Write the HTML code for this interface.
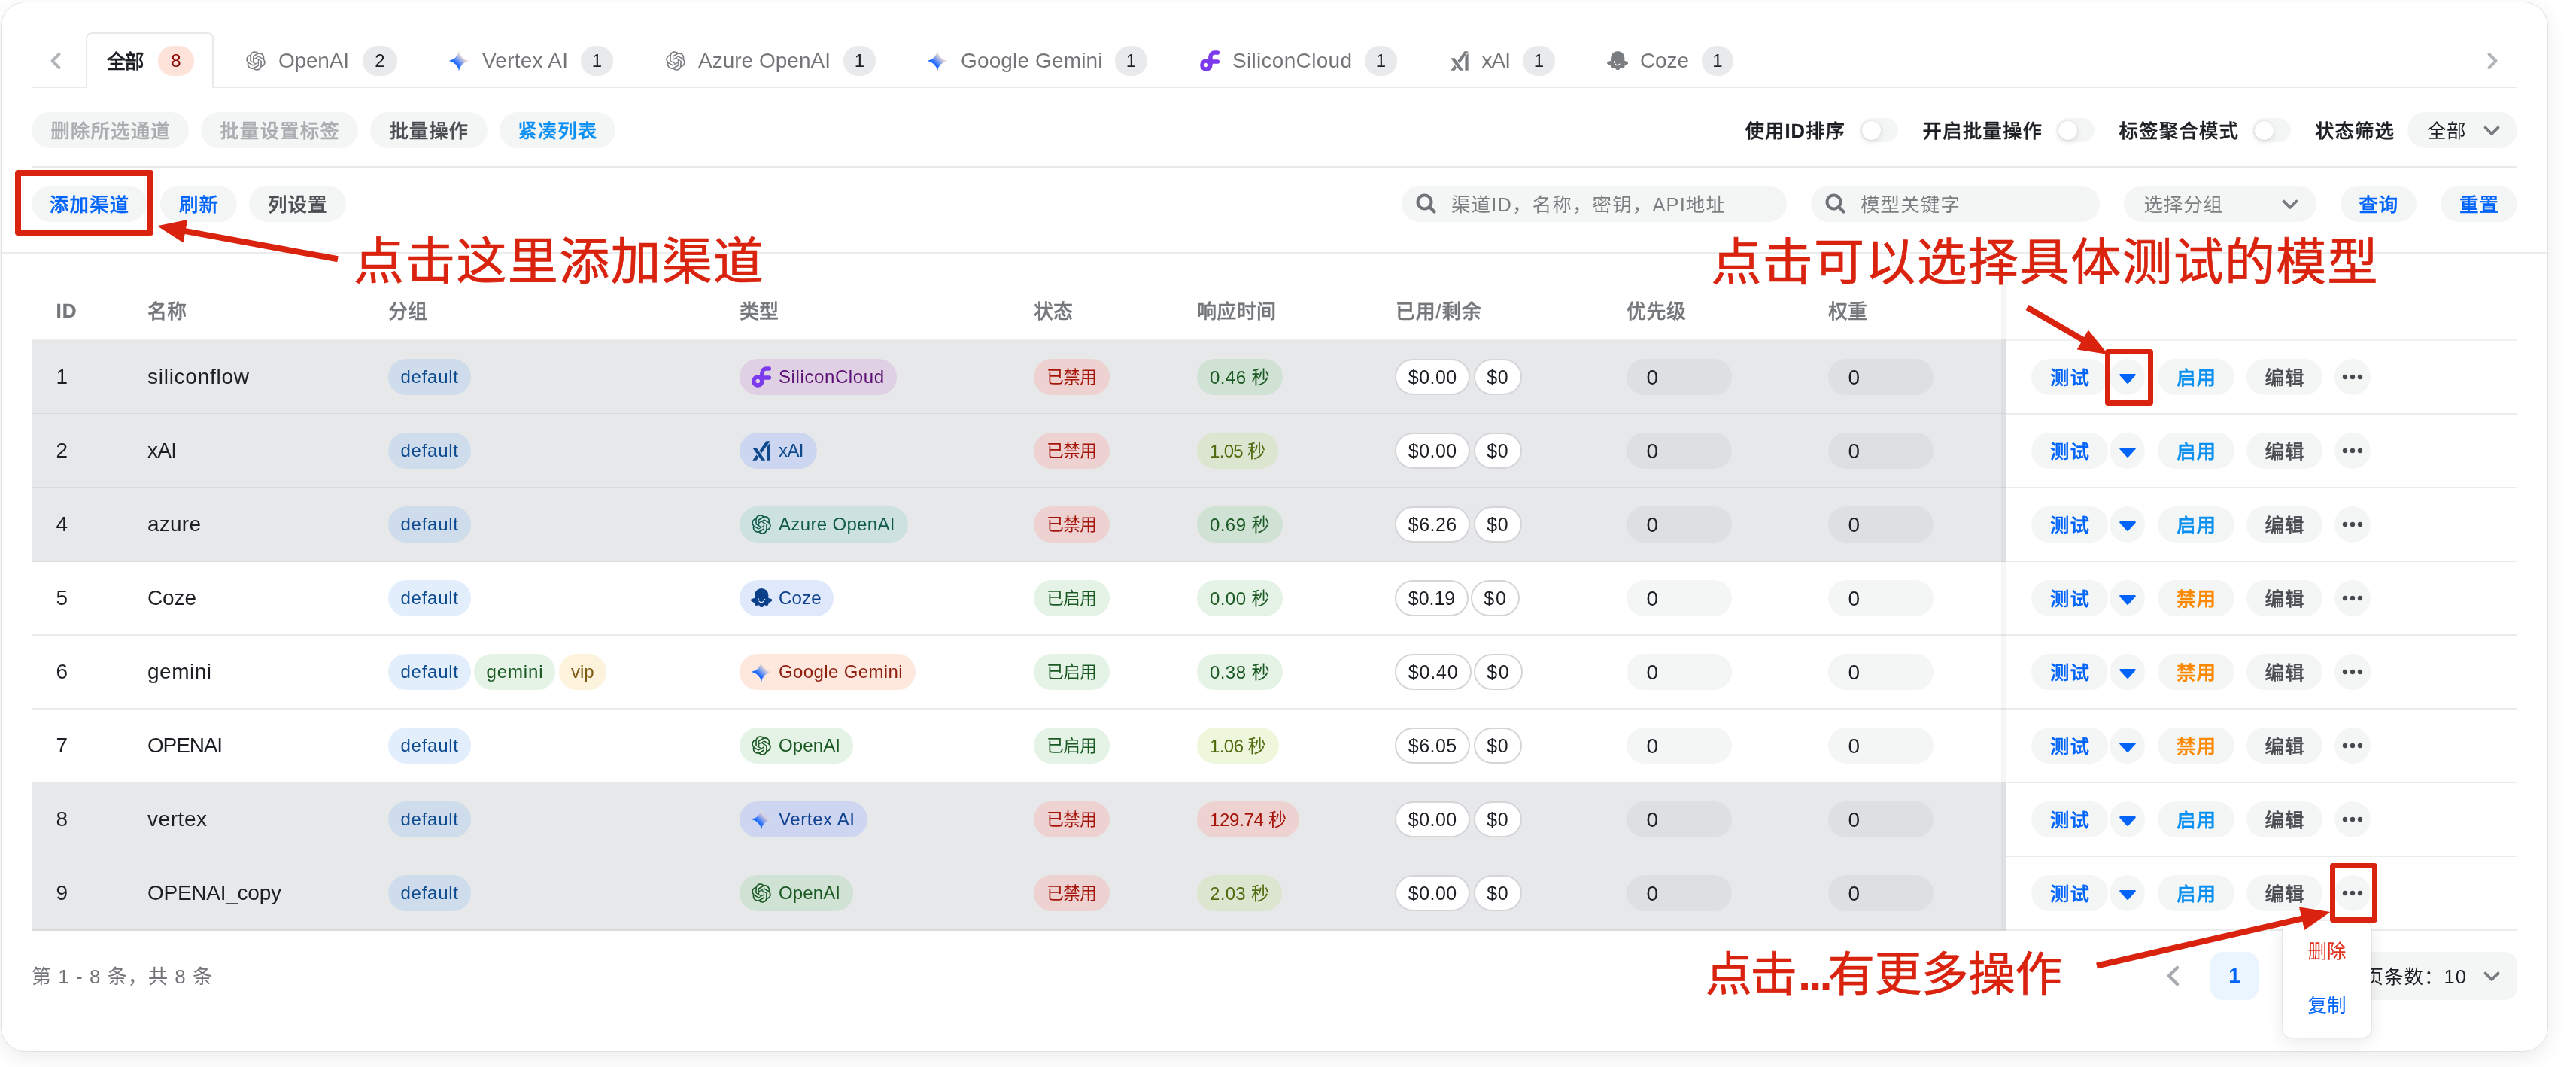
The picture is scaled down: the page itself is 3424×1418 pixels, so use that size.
<!DOCTYPE html>
<html lang="zh-CN"><head><meta charset="utf-8"><title>渠道管理</title><style>
html,body{margin:0;padding:0;}
body{width:3424px;height:1418px;overflow:hidden;background:#fff;font-family:"Liberation Sans","Noto Sans CJK SC",sans-serif;position:relative;}
#root{position:absolute;left:0;top:0;width:3424px;height:1418px;will-change:transform;}
.a{position:absolute;box-sizing:border-box;}
.t{white-space:nowrap;}
b{font-weight:700;}
</style></head><body>
<svg width="0" height="0" style="position:absolute"><defs><linearGradient id="gg" x1="0%" x2="68.73%" y1="100%" y2="30.395%"><stop offset="0%" stop-color="#1C7DFF"/><stop offset="52.021%" stop-color="#1C69FF"/><stop offset="100%" stop-color="#F0DCD6"/></linearGradient></defs></svg>
<div id="root">
<div class="a" style="left:0.5px;top:1.5px;width:3386.5px;height:1396.5px;background:#fff;border-radius:33px;border:1.5px solid #DFE1E4;box-shadow:0 8px 28px rgba(0,0,0,.08);"></div>
<div class="a" style="left:42px;top:115px;width:3304px;height:2px;background:#E9EAEC;border-radius:0px;"></div>
<div class="a" style="left:114px;top:43px;width:169.5px;height:74px;background:#fff;border-radius:8px 8px 0 0;border:2px solid #E9EAEC;border-bottom:none;"></div>
<svg class="a" style="left:63px;top:65px" width="24" height="32" viewBox="0 0 24 32"><path d="M15.5 7L6.5 16l9 9" fill="none" stroke="#B2B6B8" stroke-width="4" stroke-linecap="round" stroke-linejoin="round"/></svg>
<svg class="a" style="left:3301px;top:65px" width="24" height="32" viewBox="0 0 24 32"><path d="M7.5 7l9 9-9 9" fill="none" stroke="#B2B6B8" stroke-width="4" stroke-linecap="round" stroke-linejoin="round"/></svg>
<span class="a t" style="left:141.50px;top:62.80px;height:39px;line-height:39px;font-size:26px;color:#1C1F23;font-weight:500;letter-spacing:-2.016px;-webkit-text-stroke:.4px;">全部</span>
<div class="a" style="left:210px;top:61px;width:48px;height:40px;background:#FDE3DA;border-radius:20px;"></div>
<span class="a t" style="left:227.32px;top:63.00px;height:36px;line-height:36px;font-size:24px;color:#8E0805;font-weight:500;">8</span>
<svg class="a" style="left:326px;top:67px;color:#7A7D80;" width="28" height="28" viewBox="0 0 24 24"><path fill="currentColor" transform="translate(1 1) scale(.9167)" d="M22.2819 9.8211a5.9847 5.9847 0 0 0-.5157-4.9108 6.0462 6.0462 0 0 0-6.5098-2.9A6.0651 6.0651 0 0 0 4.9807 4.1818a5.9847 5.9847 0 0 0-3.9977 2.9 6.0462 6.0462 0 0 0 .7427 7.0966 5.98 5.98 0 0 0 .511 4.9107 6.051 6.051 0 0 0 6.5146 2.9001A5.9847 5.9847 0 0 0 13.2599 24a6.0557 6.0557 0 0 0 5.7718-4.2058 5.9894 5.9894 0 0 0 3.9977-2.9001 6.0557 6.0557 0 0 0-.7475-7.0729zm-9.022 12.6081a4.4755 4.4755 0 0 1-2.8764-1.0408l.1419-.0804 4.7783-2.7582a.7948.7948 0 0 0 .3927-.6813v-6.7369l2.02 1.1686a.071.071 0 0 1 .038.052v5.5826a4.504 4.504 0 0 1-4.4945 4.4944zm-9.6607-4.1254a4.4708 4.4708 0 0 1-.5346-3.0137l.142.0852 4.783 2.7582a.7712.7712 0 0 0 .7806 0l5.8428-3.3685v2.3324a.0804.0804 0 0 1-.0332.0615L9.74 19.9502a4.4992 4.4992 0 0 1-6.1408-1.6464zM2.3408 7.8956a4.485 4.485 0 0 1 2.3655-1.9728V11.6a.7664.7664 0 0 0 .3879.6765l5.8144 3.3543-2.0201 1.1685a.0757.0757 0 0 1-.071 0l-4.8303-2.7865A4.504 4.504 0 0 1 2.3408 7.872zm16.5963 3.8558L13.1038 8.364 15.1192 7.2a.0757.0757 0 0 1 .071 0l4.8303 2.7913a4.4944 4.4944 0 0 1-.6765 8.1042v-5.6772a.79.79 0 0 0-.407-.667zm2.0107-3.0231l-.142-.0852-4.7735-2.7818a.7759.7759 0 0 0-.7854 0L9.409 9.2297V6.8974a.0662.0662 0 0 1 .0284-.0615l4.8303-2.7866a4.4992 4.4992 0 0 1 6.6802 4.66zM8.3065 12.863l-2.02-1.1638a.0804.0804 0 0 1-.038-.0567V6.0742a4.4992 4.4992 0 0 1 7.3757-3.4537l-.142.0805L8.704 5.459a.7948.7948 0 0 0-.3927.6813zm1.0976-2.3654l2.602-1.4998 2.6069 1.4998v2.9994l-2.5974 1.4997-2.6067-1.4997Z"/></svg>
<span class="a t" style="left:370.00px;top:60.00px;height:42px;line-height:42px;font-size:28px;color:rgba(28,31,35,.62);font-weight:400;letter-spacing:-0.191px;">OpenAI</span>
<div class="a" style="left:482px;top:61px;width:46px;height:40px;background:#E9EAEB;border-radius:20px;"></div>
<span class="a t" style="left:498.32px;top:63.00px;height:36px;line-height:36px;font-size:24px;color:#1C1F23;font-weight:400;">2</span>
<svg class="a" style="left:595.5px;top:67px;color:#7A7D80;" width="28" height="28" viewBox="0 0 24 24"><path fill="url(#gg)" transform="translate(.5 .5) scale(0.9583)" d="M12 24A14.304 14.304 0 0 0 0 12 14.304 14.304 0 0 0 12 0a14.305 14.305 0 0 0 12 12 14.305 14.305 0 0 0-12 12"/></svg>
<span class="a t" style="left:641.00px;top:60.00px;height:42px;line-height:42px;font-size:28px;color:rgba(28,31,35,.62);font-weight:400;letter-spacing:0.240px;">Vertex AI</span>
<div class="a" style="left:772px;top:61px;width:43px;height:40px;background:#E9EAEB;border-radius:20px;"></div>
<span class="a t" style="left:786.82px;top:63.00px;height:36px;line-height:36px;font-size:24px;color:#1C1F23;font-weight:400;">1</span>
<svg class="a" style="left:884px;top:67px;color:#7A7D80;" width="28" height="28" viewBox="0 0 24 24"><path fill="currentColor" transform="translate(1 1) scale(.9167)" d="M22.2819 9.8211a5.9847 5.9847 0 0 0-.5157-4.9108 6.0462 6.0462 0 0 0-6.5098-2.9A6.0651 6.0651 0 0 0 4.9807 4.1818a5.9847 5.9847 0 0 0-3.9977 2.9 6.0462 6.0462 0 0 0 .7427 7.0966 5.98 5.98 0 0 0 .511 4.9107 6.051 6.051 0 0 0 6.5146 2.9001A5.9847 5.9847 0 0 0 13.2599 24a6.0557 6.0557 0 0 0 5.7718-4.2058 5.9894 5.9894 0 0 0 3.9977-2.9001 6.0557 6.0557 0 0 0-.7475-7.0729zm-9.022 12.6081a4.4755 4.4755 0 0 1-2.8764-1.0408l.1419-.0804 4.7783-2.7582a.7948.7948 0 0 0 .3927-.6813v-6.7369l2.02 1.1686a.071.071 0 0 1 .038.052v5.5826a4.504 4.504 0 0 1-4.4945 4.4944zm-9.6607-4.1254a4.4708 4.4708 0 0 1-.5346-3.0137l.142.0852 4.783 2.7582a.7712.7712 0 0 0 .7806 0l5.8428-3.3685v2.3324a.0804.0804 0 0 1-.0332.0615L9.74 19.9502a4.4992 4.4992 0 0 1-6.1408-1.6464zM2.3408 7.8956a4.485 4.485 0 0 1 2.3655-1.9728V11.6a.7664.7664 0 0 0 .3879.6765l5.8144 3.3543-2.0201 1.1685a.0757.0757 0 0 1-.071 0l-4.8303-2.7865A4.504 4.504 0 0 1 2.3408 7.872zm16.5963 3.8558L13.1038 8.364 15.1192 7.2a.0757.0757 0 0 1 .071 0l4.8303 2.7913a4.4944 4.4944 0 0 1-.6765 8.1042v-5.6772a.79.79 0 0 0-.407-.667zm2.0107-3.0231l-.142-.0852-4.7735-2.7818a.7759.7759 0 0 0-.7854 0L9.409 9.2297V6.8974a.0662.0662 0 0 1 .0284-.0615l4.8303-2.7866a4.4992 4.4992 0 0 1 6.6802 4.66zM8.3065 12.863l-2.02-1.1638a.0804.0804 0 0 1-.038-.0567V6.0742a4.4992 4.4992 0 0 1 7.3757-3.4537l-.142.0805L8.704 5.459a.7948.7948 0 0 0-.3927.6813zm1.0976-2.3654l2.602-1.4998 2.6069 1.4998v2.9994l-2.5974 1.4997-2.6067-1.4997Z"/></svg>
<span class="a t" style="left:928.00px;top:60.00px;height:42px;line-height:42px;font-size:28px;color:rgba(28,31,35,.62);font-weight:400;letter-spacing:0.011px;">Azure OpenAI</span>
<div class="a" style="left:1121px;top:61px;width:43px;height:40px;background:#E9EAEB;border-radius:20px;"></div>
<span class="a t" style="left:1135.82px;top:63.00px;height:36px;line-height:36px;font-size:24px;color:#1C1F23;font-weight:400;">1</span>
<svg class="a" style="left:1232px;top:67px;color:#7A7D80;" width="28" height="28" viewBox="0 0 24 24"><path fill="url(#gg)" transform="translate(.5 .5) scale(0.9583)" d="M12 24A14.304 14.304 0 0 0 0 12 14.304 14.304 0 0 0 12 0a14.305 14.305 0 0 0 12 12 14.305 14.305 0 0 0-12 12"/></svg>
<span class="a t" style="left:1277.00px;top:60.00px;height:42px;line-height:42px;font-size:28px;color:rgba(28,31,35,.62);font-weight:400;letter-spacing:0.145px;">Google Gemini</span>
<div class="a" style="left:1482px;top:61px;width:43px;height:40px;background:#E9EAEB;border-radius:20px;"></div>
<span class="a t" style="left:1496.82px;top:63.00px;height:36px;line-height:36px;font-size:24px;color:#1C1F23;font-weight:400;">1</span>
<svg class="a" style="left:1594px;top:67px;color:#7C3AED;" width="28" height="28" viewBox="0 0 24 24"><g fill="none" stroke="currentColor" stroke-width="4.8" stroke-linecap="round"><circle cx="8" cy="16.75" r="4.7"/><path d="M12.8 15.5V7.4a4.8 4.8 0 0 1 4.8-4.8h3.2M12.8 12.8h8"/></g></svg>
<span class="a t" style="left:1638.00px;top:60.00px;height:42px;line-height:42px;font-size:28px;color:rgba(28,31,35,.62);font-weight:400;letter-spacing:0.305px;">SiliconCloud</span>
<div class="a" style="left:1814px;top:61px;width:43px;height:40px;background:#E9EAEB;border-radius:20px;"></div>
<span class="a t" style="left:1828.82px;top:63.00px;height:36px;line-height:36px;font-size:24px;color:#1C1F23;font-weight:400;">1</span>
<svg class="a" style="left:1926px;top:67px;color:#7A7D80;" width="28" height="28" viewBox="0 0 24 24"><path fill="currentColor" d="M6.469 8.776L16.512 23h-4.464L2.005 8.776H6.47zm-.004 7.9l2.233 3.164L6.467 23H2l4.465-6.324zM22 2.582V23h-3.659V7.764L22 2.582zM22 1l-9.952 14.095-2.233-3.163L17.533 1H22z"/></svg>
<span class="a t" style="left:1969.50px;top:60.00px;height:42px;line-height:42px;font-size:28px;color:rgba(28,31,35,.62);font-weight:400;letter-spacing:-0.984px;">xAI</span>
<div class="a" style="left:2024px;top:61px;width:43px;height:40px;background:#E9EAEB;border-radius:20px;"></div>
<span class="a t" style="left:2038.82px;top:63.00px;height:36px;line-height:36px;font-size:24px;color:#1C1F23;font-weight:400;">1</span>
<svg class="a" style="left:2136px;top:67px;color:#7A7D80;" width="28" height="28" viewBox="0 0 24 24"><g fill="currentColor"><path d="M4.4 8.3A7.8 7.45 0 0 1 20 8.3V18.7H4.4z"/><rect x="6.3" y="17.5" width="11.8" height="2.5"/><path d="M4.6 11.7L1.2 12.9A1.4 1.4 0 0 0 1 15.6L4.6 17.7zM19.8 11.7l3.4 1.2a1.4 1.4 0 0 1 .2 2.7L19.8 17.7z"/><circle cx="6.3" cy="18.7" r="1.95"/><circle cx="12.2" cy="19.7" r="2.65"/><circle cx="18.1" cy="18.7" r="1.95"/></g><g fill="var(--e,#fff)" stroke="none"><rect x="7.75" y="11.9" width="1.45" height="2.7" rx=".72"/><rect x="14.7" y="12.75" width="1.75" height=".9" rx=".45"/></g><path d="M9.4 15.5Q11.95 18.4 14.5 15.5" fill="none" stroke="var(--e,#fff)" stroke-width="1.05" stroke-linecap="round"/></svg>
<span class="a t" style="left:2180.00px;top:60.00px;height:42px;line-height:42px;font-size:28px;color:rgba(28,31,35,.62);font-weight:400;letter-spacing:-0.125px;">Coze</span>
<div class="a" style="left:2262px;top:61px;width:42px;height:40px;background:#E9EAEB;border-radius:20px;"></div>
<span class="a t" style="left:2276.32px;top:63.00px;height:36px;line-height:36px;font-size:24px;color:#1C1F23;font-weight:400;">1</span>
<div class="a" style="left:42px;top:149px;width:209px;height:48px;background:rgba(46,50,56,.05);border-radius:24.0px;"></div>
<span class="a t" style="left:67.25px;top:155.28px;height:38px;line-height:38px;font-size:25.5px;color:#AAADB0;font-weight:500;letter-spacing:1.097px;-webkit-text-stroke:.4px;">删除所选通道</span>
<div class="a" style="left:267px;top:149px;width:209px;height:48px;background:rgba(46,50,56,.05);border-radius:24.0px;"></div>
<span class="a t" style="left:292.25px;top:155.28px;height:38px;line-height:38px;font-size:25.5px;color:#AAADB0;font-weight:500;letter-spacing:1.097px;-webkit-text-stroke:.4px;">批量设置标签</span>
<div class="a" style="left:492px;top:149px;width:155.5px;height:48px;background:rgba(46,50,56,.05);border-radius:24.0px;"></div>
<span class="a t" style="left:517.50px;top:155.28px;height:38px;line-height:38px;font-size:25.5px;color:#4B4E52;font-weight:500;letter-spacing:0.828px;-webkit-text-stroke:.4px;">批量操作</span>
<div class="a" style="left:663.5px;top:149px;width:154.5px;height:48px;background:rgba(46,50,56,.05);border-radius:24.0px;"></div>
<span class="a t" style="left:688.25px;top:155.28px;height:38px;line-height:38px;font-size:25.5px;color:#0A90F5;font-weight:500;letter-spacing:0.995px;-webkit-text-stroke:.4px;">紧凑列表</span>
<span class="a t" style="left:2319.50px;top:155.28px;height:38px;line-height:38px;font-size:25.5px;color:#1C1F23;font-weight:500;letter-spacing:0.994px;-webkit-text-stroke:.4px;">使用<b>ID</b>排序</span>
<div class="a" style="left:2471.5px;top:157px;width:51px;height:32px;background:rgba(46,50,56,.05);border-radius:16px;"></div>
<div class="a" style="left:2474.5px;top:160.5px;width:25px;height:25px;background:#fff;border-radius:13px;box-shadow:0 3px 8px rgba(0,0,0,.10),0 0 2px rgba(0,0,0,.12);"></div>
<span class="a t" style="left:2555.50px;top:155.28px;height:38px;line-height:38px;font-size:25.5px;color:#1C1F23;font-weight:500;letter-spacing:1.097px;-webkit-text-stroke:.4px;">开启批量操作</span>
<div class="a" style="left:2732.5px;top:157px;width:51px;height:32px;background:rgba(46,50,56,.05);border-radius:16px;"></div>
<div class="a" style="left:2735.5px;top:160.5px;width:25px;height:25px;background:#fff;border-radius:13px;box-shadow:0 3px 8px rgba(0,0,0,.10),0 0 2px rgba(0,0,0,.12);"></div>
<span class="a t" style="left:2816.50px;top:155.28px;height:38px;line-height:38px;font-size:25.5px;color:#1C1F23;font-weight:500;letter-spacing:1.097px;-webkit-text-stroke:.4px;">标签聚合模式</span>
<div class="a" style="left:2993.5px;top:157px;width:51px;height:32px;background:rgba(46,50,56,.05);border-radius:16px;"></div>
<div class="a" style="left:2996.5px;top:160.5px;width:25px;height:25px;background:#fff;border-radius:13px;box-shadow:0 3px 8px rgba(0,0,0,.10),0 0 2px rgba(0,0,0,.12);"></div>
<span class="a t" style="left:3077.00px;top:155.28px;height:38px;line-height:38px;font-size:25.5px;color:#1C1F23;font-weight:500;letter-spacing:0.995px;-webkit-text-stroke:.4px;">状态筛选</span>
<div class="a" style="left:3200px;top:149px;width:146px;height:48px;background:rgba(46,50,56,.05);border-radius:24px;"></div>
<span class="a t" style="left:3226.00px;top:155.28px;height:38px;line-height:38px;font-size:25.5px;color:#1C1F23;font-weight:400;letter-spacing:0.484px;">全部</span>
<svg class="a" style="left:3300px;top:165px" width="24" height="18" viewBox="0 0 24 18"><path d="M3.5 4.5L12 13l8.5-8.5" fill="none" stroke="#777A7F" stroke-width="3.8" stroke-linecap="round" stroke-linejoin="round"/></svg>
<div class="a" style="left:42px;top:221px;width:3304px;height:2px;background:#E9EAEC;border-radius:0px;"></div>
<div class="a" style="left:42px;top:247px;width:153px;height:48px;background:rgba(46,50,56,.05);border-radius:24.0px;"></div>
<span class="a t" style="left:65.75px;top:253.28px;height:38px;line-height:38px;font-size:25.5px;color:#0064FA;font-weight:500;letter-spacing:1.161px;-webkit-text-stroke:.4px;">添加渠道</span>
<div class="a" style="left:213px;top:247px;width:102px;height:48px;background:rgba(46,50,56,.05);border-radius:24.0px;"></div>
<span class="a t" style="left:238.00px;top:253.28px;height:38px;line-height:38px;font-size:25.5px;color:#0064FA;font-weight:500;letter-spacing:0.984px;-webkit-text-stroke:.4px;">刷新</span>
<div class="a" style="left:330.5px;top:247px;width:129.5px;height:48px;background:rgba(46,50,56,.05);border-radius:24.0px;"></div>
<span class="a t" style="left:356.00px;top:253.28px;height:38px;line-height:38px;font-size:25.5px;color:#4B4E52;font-weight:500;letter-spacing:0.992px;-webkit-text-stroke:.4px;">列设置</span>
<div class="a" style="left:1863px;top:247px;width:512px;height:48px;background:rgba(46,50,56,.05);border-radius:24px;"></div>
<svg class="a" style="left:1881px;top:256px" width="30" height="30" viewBox="0 0 30 30"><circle cx="12.5" cy="12.5" r="9" fill="none" stroke="#6F7276" stroke-width="4"/><path d="M19.5 19.5L25.5 25.5" stroke="#6F7276" stroke-width="4.2" stroke-linecap="round"/></svg>
<span class="a t" style="left:1929.00px;top:253.28px;height:38px;line-height:38px;font-size:25.5px;color:rgba(28,31,35,.56);font-weight:400;letter-spacing:1.126px;">渠道ID，名称，密钥，API地址</span>
<div class="a" style="left:2407px;top:247px;width:384px;height:48px;background:rgba(46,50,56,.05);border-radius:24px;"></div>
<svg class="a" style="left:2425px;top:256px" width="30" height="30" viewBox="0 0 30 30"><circle cx="12.5" cy="12.5" r="9" fill="none" stroke="#6F7276" stroke-width="4"/><path d="M19.5 19.5L25.5 25.5" stroke="#6F7276" stroke-width="4.2" stroke-linecap="round"/></svg>
<span class="a t" style="left:2473.00px;top:253.28px;height:38px;line-height:38px;font-size:25.5px;color:rgba(28,31,35,.56);font-weight:400;letter-spacing:1.121px;">模型关键字</span>
<div class="a" style="left:2823px;top:247px;width:256px;height:48px;background:rgba(46,50,56,.05);border-radius:24px;"></div>
<span class="a t" style="left:2849.50px;top:253.28px;height:38px;line-height:38px;font-size:25.5px;color:rgba(28,31,35,.56);font-weight:400;letter-spacing:0.828px;">选择分组</span>
<svg class="a" style="left:3032px;top:263px" width="24" height="18" viewBox="0 0 24 18"><path d="M3.5 4.5L12 13l8.5-8.5" fill="none" stroke="#777A7F" stroke-width="3.8" stroke-linecap="round" stroke-linejoin="round"/></svg>
<div class="a" style="left:3111px;top:247px;width:100.5px;height:48px;background:rgba(46,50,56,.05);border-radius:24.0px;"></div>
<span class="a t" style="left:3135.25px;top:253.28px;height:38px;line-height:38px;font-size:25.5px;color:#0064FA;font-weight:500;letter-spacing:0.984px;-webkit-text-stroke:.4px;">查询</span>
<div class="a" style="left:3244px;top:247px;width:102px;height:48px;background:rgba(46,50,56,.05);border-radius:24.0px;"></div>
<span class="a t" style="left:3269.00px;top:253.28px;height:38px;line-height:38px;font-size:25.5px;color:#0064FA;font-weight:500;letter-spacing:0.984px;-webkit-text-stroke:.4px;">重置</span>
<div class="a" style="left:3px;top:335px;width:3383px;height:2px;background:#EBECEE;border-radius:0px;"></div>
<span class="a t" style="left:74.50px;top:393.50px;height:39px;line-height:39px;font-size:26px;color:#75787B;font-weight:500;letter-spacing:1.000px;-webkit-text-stroke:.4px;"><b>ID</b></span>
<span class="a t" style="left:196.00px;top:394.80px;height:39px;line-height:39px;font-size:26px;color:#75787B;font-weight:500;letter-spacing:-0.016px;-webkit-text-stroke:.4px;">名称</span>
<span class="a t" style="left:516.00px;top:394.80px;height:39px;line-height:39px;font-size:26px;color:#75787B;font-weight:500;letter-spacing:-0.016px;-webkit-text-stroke:.4px;">分组</span>
<span class="a t" style="left:983.00px;top:394.80px;height:39px;line-height:39px;font-size:26px;color:#75787B;font-weight:500;letter-spacing:-0.016px;-webkit-text-stroke:.4px;">类型</span>
<span class="a t" style="left:1374.00px;top:394.80px;height:39px;line-height:39px;font-size:26px;color:#75787B;font-weight:500;letter-spacing:-0.016px;-webkit-text-stroke:.4px;">状态</span>
<span class="a t" style="left:1591.00px;top:394.80px;height:39px;line-height:39px;font-size:26px;color:#75787B;font-weight:500;letter-spacing:0.328px;-webkit-text-stroke:.4px;">响应时间</span>
<span class="a t" style="left:1855.00px;top:394.80px;height:39px;line-height:39px;font-size:26px;color:#75787B;font-weight:500;letter-spacing:0.684px;-webkit-text-stroke:.4px;">已用/剩余</span>
<span class="a t" style="left:2162.00px;top:394.80px;height:39px;line-height:39px;font-size:26px;color:#75787B;font-weight:500;letter-spacing:0.492px;-webkit-text-stroke:.4px;">优先级</span>
<span class="a t" style="left:2430.00px;top:394.80px;height:39px;line-height:39px;font-size:26px;color:#75787B;font-weight:500;letter-spacing:-0.016px;-webkit-text-stroke:.4px;">权重</span>
<div class="a" style="left:42px;top:449.5px;width:3304px;height:3.5px;background:#EEEFF1;border-radius:0px;"></div>
<div class="a" style="left:42px;top:452px;width:2624px;height:98px;background:#E6E8EA;border-radius:0px;"></div>
<div class="a" style="left:42px;top:549px;width:3304px;height:2px;background:#D8DADD;border-radius:0px;"></div>
<span class="a t" style="left:74.50px;top:480.00px;height:42px;line-height:42px;font-size:28px;color:#1C1F23;font-weight:400;">1</span>
<span class="a t" style="left:196.00px;top:480.00px;height:42px;line-height:42px;font-size:28px;color:#1C1F23;font-weight:400;letter-spacing:0.739px;">siliconflow</span>
<div class="a" style="left:516px;top:477px;width:109.5px;height:48px;background:#CFDCEB;border-radius:24px;"></div>
<span class="a t" style="left:532.50px;top:483.00px;height:36px;line-height:36px;font-size:24px;color:#0B4A8F;font-weight:400;letter-spacing:0.740px;">default</span>
<div class="a" style="left:983px;top:477px;width:209px;height:48px;background:#DFD0E3;border-radius:24px;"></div>
<svg class="a" style="left:998px;top:487px;color:#7C3AED;--e:#DFD0E3;" width="28" height="28" viewBox="0 0 24 24"><g fill="none" stroke="currentColor" stroke-width="4.8" stroke-linecap="round"><circle cx="8" cy="16.75" r="4.7"/><path d="M12.8 15.5V7.4a4.8 4.8 0 0 1 4.8-4.8h3.2M12.8 12.8h8"/></g></svg>
<span class="a t" style="left:1035.00px;top:483.00px;height:36px;line-height:36px;font-size:24px;color:#5C0F75;font-weight:400;letter-spacing:0.599px;">SiliconCloud</span>
<div class="a" style="left:1374px;top:477px;width:101px;height:48px;background:#EED2D2;border-radius:24px;"></div>
<span class="a t" style="left:1391.25px;top:485.12px;height:34px;line-height:34px;font-size:22.5px;color:#A51409;font-weight:400;letter-spacing:-0.508px;">已禁用</span>
<div class="a" style="left:1591px;top:477px;width:113.5px;height:48px;background:#CFE2D3;border-radius:24px;"></div>
<span class="a t" style="left:1608.00px;top:484.20px;height:36px;line-height:36px;font-size:24px;color:#1B5924;font-weight:400;letter-spacing:0.422px;">0.46 秒</span>
<div class="a" style="left:1854px;top:477px;width:100px;height:48px;background:#fff;border-radius:24px;border:2px solid #D3D5D9;"></div>
<span class="a t" style="left:1871.75px;top:482.00px;height:38px;line-height:38px;font-size:25px;color:#1C1F23;font-weight:400;letter-spacing:0.484px;">$0.00</span>
<div class="a" style="left:1958.5px;top:477px;width:64px;height:48px;background:#fff;border-radius:24px;border:2px solid #D3D5D9;"></div>
<span class="a t" style="left:1976.25px;top:482.00px;height:38px;line-height:38px;font-size:25px;color:#1C1F23;font-weight:400;letter-spacing:0.688px;">$0</span>
<div class="a" style="left:2162px;top:477px;width:140px;height:48px;background:#DDDFE2;border-radius:24px;"></div>
<span class="a t" style="left:2188.50px;top:481.00px;height:42px;line-height:42px;font-size:28px;color:#1C1F23;font-weight:400;">0</span>
<div class="a" style="left:2430px;top:477px;width:140px;height:48px;background:#DDDFE2;border-radius:24px;"></div>
<span class="a t" style="left:2456.50px;top:481.00px;height:42px;line-height:42px;font-size:28px;color:#1C1F23;font-weight:400;">0</span>
<div class="a" style="left:42px;top:550px;width:2624px;height:98px;background:#E6E8EA;border-radius:0px;"></div>
<div class="a" style="left:42px;top:647px;width:3304px;height:2px;background:#D8DADD;border-radius:0px;"></div>
<span class="a t" style="left:74.50px;top:578.00px;height:42px;line-height:42px;font-size:28px;color:#1C1F23;font-weight:400;">2</span>
<span class="a t" style="left:196.00px;top:578.00px;height:42px;line-height:42px;font-size:28px;color:#1C1F23;font-weight:400;letter-spacing:-0.734px;">xAI</span>
<div class="a" style="left:516px;top:575px;width:109.5px;height:48px;background:#CFDCEB;border-radius:24px;"></div>
<span class="a t" style="left:532.50px;top:581.00px;height:36px;line-height:36px;font-size:24px;color:#0B4A8F;font-weight:400;letter-spacing:0.740px;">default</span>
<div class="a" style="left:983px;top:575px;width:102.5px;height:48px;background:#CDD6F0;border-radius:24px;"></div>
<svg class="a" style="left:998px;top:585px;color:#0E4A8C;--e:#CDD6F0;" width="28" height="28" viewBox="0 0 24 24"><path fill="currentColor" d="M6.469 8.776L16.512 23h-4.464L2.005 8.776H6.47zm-.004 7.9l2.233 3.164L6.467 23H2l4.465-6.324zM22 2.582V23h-3.659V7.764L22 2.582zM22 1l-9.952 14.095-2.233-3.163L17.533 1H22z"/></svg>
<span class="a t" style="left:1035.00px;top:581.00px;height:36px;line-height:36px;font-size:24px;color:#0E4A8C;font-weight:400;letter-spacing:-0.594px;">xAI</span>
<div class="a" style="left:1374px;top:575px;width:101px;height:48px;background:#EED2D2;border-radius:24px;"></div>
<span class="a t" style="left:1391.25px;top:583.12px;height:34px;line-height:34px;font-size:22.5px;color:#A51409;font-weight:400;letter-spacing:-0.508px;">已禁用</span>
<div class="a" style="left:1591px;top:575px;width:108px;height:48px;background:#DCE5CF;border-radius:24px;"></div>
<span class="a t" style="left:1608.00px;top:582.20px;height:36px;line-height:36px;font-size:24px;color:#4F6B0E;font-weight:400;letter-spacing:-0.678px;">1.05 秒</span>
<div class="a" style="left:1854px;top:575px;width:100px;height:48px;background:#fff;border-radius:24px;border:2px solid #D3D5D9;"></div>
<span class="a t" style="left:1871.75px;top:580.00px;height:38px;line-height:38px;font-size:25px;color:#1C1F23;font-weight:400;letter-spacing:0.484px;">$0.00</span>
<div class="a" style="left:1958.5px;top:575px;width:64px;height:48px;background:#fff;border-radius:24px;border:2px solid #D3D5D9;"></div>
<span class="a t" style="left:1976.25px;top:580.00px;height:38px;line-height:38px;font-size:25px;color:#1C1F23;font-weight:400;letter-spacing:0.688px;">$0</span>
<div class="a" style="left:2162px;top:575px;width:140px;height:48px;background:#DDDFE2;border-radius:24px;"></div>
<span class="a t" style="left:2188.50px;top:579.00px;height:42px;line-height:42px;font-size:28px;color:#1C1F23;font-weight:400;">0</span>
<div class="a" style="left:2430px;top:575px;width:140px;height:48px;background:#DDDFE2;border-radius:24px;"></div>
<span class="a t" style="left:2456.50px;top:579.00px;height:42px;line-height:42px;font-size:28px;color:#1C1F23;font-weight:400;">0</span>
<div class="a" style="left:42px;top:648px;width:2624px;height:98px;background:#E6E8EA;border-radius:0px;"></div>
<div class="a" style="left:42px;top:745px;width:3304px;height:2px;background:#D8DADD;border-radius:0px;"></div>
<span class="a t" style="left:74.50px;top:676.00px;height:42px;line-height:42px;font-size:28px;color:#1C1F23;font-weight:400;">4</span>
<span class="a t" style="left:196.00px;top:676.00px;height:42px;line-height:42px;font-size:28px;color:#1C1F23;font-weight:400;letter-spacing:0.238px;">azure</span>
<div class="a" style="left:516px;top:673px;width:109.5px;height:48px;background:#CFDCEB;border-radius:24px;"></div>
<span class="a t" style="left:532.50px;top:679.00px;height:36px;line-height:36px;font-size:24px;color:#0B4A8F;font-weight:400;letter-spacing:0.740px;">default</span>
<div class="a" style="left:983px;top:673px;width:223.5px;height:48px;background:#CDE2E0;border-radius:24px;"></div>
<svg class="a" style="left:998px;top:683px;color:#0E5A4A;--e:#CDE2E0;" width="28" height="28" viewBox="0 0 24 24"><path fill="currentColor" transform="translate(1 1) scale(.9167)" d="M22.2819 9.8211a5.9847 5.9847 0 0 0-.5157-4.9108 6.0462 6.0462 0 0 0-6.5098-2.9A6.0651 6.0651 0 0 0 4.9807 4.1818a5.9847 5.9847 0 0 0-3.9977 2.9 6.0462 6.0462 0 0 0 .7427 7.0966 5.98 5.98 0 0 0 .511 4.9107 6.051 6.051 0 0 0 6.5146 2.9001A5.9847 5.9847 0 0 0 13.2599 24a6.0557 6.0557 0 0 0 5.7718-4.2058 5.9894 5.9894 0 0 0 3.9977-2.9001 6.0557 6.0557 0 0 0-.7475-7.0729zm-9.022 12.6081a4.4755 4.4755 0 0 1-2.8764-1.0408l.1419-.0804 4.7783-2.7582a.7948.7948 0 0 0 .3927-.6813v-6.7369l2.02 1.1686a.071.071 0 0 1 .038.052v5.5826a4.504 4.504 0 0 1-4.4945 4.4944zm-9.6607-4.1254a4.4708 4.4708 0 0 1-.5346-3.0137l.142.0852 4.783 2.7582a.7712.7712 0 0 0 .7806 0l5.8428-3.3685v2.3324a.0804.0804 0 0 1-.0332.0615L9.74 19.9502a4.4992 4.4992 0 0 1-6.1408-1.6464zM2.3408 7.8956a4.485 4.485 0 0 1 2.3655-1.9728V11.6a.7664.7664 0 0 0 .3879.6765l5.8144 3.3543-2.0201 1.1685a.0757.0757 0 0 1-.071 0l-4.8303-2.7865A4.504 4.504 0 0 1 2.3408 7.872zm16.5963 3.8558L13.1038 8.364 15.1192 7.2a.0757.0757 0 0 1 .071 0l4.8303 2.7913a4.4944 4.4944 0 0 1-.6765 8.1042v-5.6772a.79.79 0 0 0-.407-.667zm2.0107-3.0231l-.142-.0852-4.7735-2.7818a.7759.7759 0 0 0-.7854 0L9.409 9.2297V6.8974a.0662.0662 0 0 1 .0284-.0615l4.8303-2.7866a4.4992 4.4992 0 0 1 6.6802 4.66zM8.3065 12.863l-2.02-1.1638a.0804.0804 0 0 1-.038-.0567V6.0742a4.4992 4.4992 0 0 1 7.3757-3.4537l-.142.0805L8.704 5.459a.7948.7948 0 0 0-.3927.6813zm1.0976-2.3654l2.602-1.4998 2.6069 1.4998v2.9994l-2.5974 1.4997-2.6067-1.4997Z"/></svg>
<span class="a t" style="left:1035.00px;top:679.00px;height:36px;line-height:36px;font-size:24px;color:#0E5A4A;font-weight:400;letter-spacing:0.341px;">Azure OpenAI</span>
<div class="a" style="left:1374px;top:673px;width:101px;height:48px;background:#EED2D2;border-radius:24px;"></div>
<span class="a t" style="left:1391.25px;top:681.12px;height:34px;line-height:34px;font-size:22.5px;color:#A51409;font-weight:400;letter-spacing:-0.508px;">已禁用</span>
<div class="a" style="left:1591px;top:673px;width:113.5px;height:48px;background:#CFE2D3;border-radius:24px;"></div>
<span class="a t" style="left:1608.00px;top:680.20px;height:36px;line-height:36px;font-size:24px;color:#1B5924;font-weight:400;letter-spacing:0.422px;">0.69 秒</span>
<div class="a" style="left:1854px;top:673px;width:100px;height:48px;background:#fff;border-radius:24px;border:2px solid #D3D5D9;"></div>
<span class="a t" style="left:1871.75px;top:678.00px;height:38px;line-height:38px;font-size:25px;color:#1C1F23;font-weight:400;letter-spacing:0.484px;">$6.26</span>
<div class="a" style="left:1958.5px;top:673px;width:64px;height:48px;background:#fff;border-radius:24px;border:2px solid #D3D5D9;"></div>
<span class="a t" style="left:1976.25px;top:678.00px;height:38px;line-height:38px;font-size:25px;color:#1C1F23;font-weight:400;letter-spacing:0.688px;">$0</span>
<div class="a" style="left:2162px;top:673px;width:140px;height:48px;background:#DDDFE2;border-radius:24px;"></div>
<span class="a t" style="left:2188.50px;top:677.00px;height:42px;line-height:42px;font-size:28px;color:#1C1F23;font-weight:400;">0</span>
<div class="a" style="left:2430px;top:673px;width:140px;height:48px;background:#DDDFE2;border-radius:24px;"></div>
<span class="a t" style="left:2456.50px;top:677.00px;height:42px;line-height:42px;font-size:28px;color:#1C1F23;font-weight:400;">0</span>
<div class="a" style="left:42px;top:843px;width:3304px;height:2px;background:#EAEBED;border-radius:0px;"></div>
<span class="a t" style="left:74.50px;top:774.00px;height:42px;line-height:42px;font-size:28px;color:#1C1F23;font-weight:400;">5</span>
<span class="a t" style="left:196.00px;top:774.00px;height:42px;line-height:42px;font-size:28px;color:#1C1F23;font-weight:400;letter-spacing:-0.125px;">Coze</span>
<div class="a" style="left:516px;top:771px;width:109.5px;height:48px;background:#E3EEFC;border-radius:24px;"></div>
<span class="a t" style="left:532.50px;top:777.00px;height:36px;line-height:36px;font-size:24px;color:#0B4A8F;font-weight:400;letter-spacing:0.740px;">default</span>
<div class="a" style="left:983px;top:771px;width:124.5px;height:48px;background:#E0E9FB;border-radius:24px;"></div>
<svg class="a" style="left:998px;top:781px;color:#0B3F8A;--e:#E0E9FB;" width="28" height="28" viewBox="0 0 24 24"><g fill="currentColor"><path d="M4.4 8.3A7.8 7.45 0 0 1 20 8.3V18.7H4.4z"/><rect x="6.3" y="17.5" width="11.8" height="2.5"/><path d="M4.6 11.7L1.2 12.9A1.4 1.4 0 0 0 1 15.6L4.6 17.7zM19.8 11.7l3.4 1.2a1.4 1.4 0 0 1 .2 2.7L19.8 17.7z"/><circle cx="6.3" cy="18.7" r="1.95"/><circle cx="12.2" cy="19.7" r="2.65"/><circle cx="18.1" cy="18.7" r="1.95"/></g><g fill="var(--e,#fff)" stroke="none"><rect x="7.75" y="11.9" width="1.45" height="2.7" rx=".72"/><rect x="14.7" y="12.75" width="1.75" height=".9" rx=".45"/></g><path d="M9.4 15.5Q11.95 18.4 14.5 15.5" fill="none" stroke="var(--e,#fff)" stroke-width="1.05" stroke-linecap="round"/></svg>
<span class="a t" style="left:1035.00px;top:777.00px;height:36px;line-height:36px;font-size:24px;color:#0B3F8A;font-weight:400;letter-spacing:0.156px;">Coze</span>
<div class="a" style="left:1374px;top:771px;width:101px;height:48px;background:#E4F3E5;border-radius:24px;"></div>
<span class="a t" style="left:1391.25px;top:779.12px;height:34px;line-height:34px;font-size:22.5px;color:#1B5924;font-weight:400;letter-spacing:-0.508px;">已启用</span>
<div class="a" style="left:1591px;top:771px;width:113.5px;height:48px;background:#E4F3E5;border-radius:24px;"></div>
<span class="a t" style="left:1608.00px;top:778.20px;height:36px;line-height:36px;font-size:24px;color:#1B5924;font-weight:400;letter-spacing:0.422px;">0.00 秒</span>
<div class="a" style="left:1854px;top:771px;width:98px;height:48px;background:#fff;border-radius:24px;border:2px solid #D3D5D9;"></div>
<span class="a t" style="left:1871.75px;top:776.00px;height:38px;line-height:38px;font-size:25px;color:#1C1F23;font-weight:400;letter-spacing:-0.016px;">$0.19</span>
<div class="a" style="left:1954.5px;top:771px;width:65.2px;height:48px;background:#fff;border-radius:24px;border:2px solid #D3D5D9;"></div>
<span class="a t" style="left:1972.25px;top:776.00px;height:38px;line-height:38px;font-size:25px;color:#1C1F23;font-weight:400;letter-spacing:1.888px;">$0</span>
<div class="a" style="left:2162px;top:771px;width:140px;height:48px;background:#F4F5F5;border-radius:24px;"></div>
<span class="a t" style="left:2188.50px;top:775.00px;height:42px;line-height:42px;font-size:28px;color:#1C1F23;font-weight:400;">0</span>
<div class="a" style="left:2430px;top:771px;width:140px;height:48px;background:#F4F5F5;border-radius:24px;"></div>
<span class="a t" style="left:2456.50px;top:775.00px;height:42px;line-height:42px;font-size:28px;color:#1C1F23;font-weight:400;">0</span>
<div class="a" style="left:42px;top:941px;width:3304px;height:2px;background:#EAEBED;border-radius:0px;"></div>
<span class="a t" style="left:74.50px;top:872.00px;height:42px;line-height:42px;font-size:28px;color:#1C1F23;font-weight:400;">6</span>
<span class="a t" style="left:196.00px;top:872.00px;height:42px;line-height:42px;font-size:28px;color:#1C1F23;font-weight:400;letter-spacing:0.503px;">gemini</span>
<div class="a" style="left:516px;top:869px;width:109.5px;height:48px;background:#E3EEFC;border-radius:24px;"></div>
<span class="a t" style="left:532.50px;top:875.00px;height:36px;line-height:36px;font-size:24px;color:#0B4A8F;font-weight:400;letter-spacing:0.740px;">default</span>
<div class="a" style="left:630px;top:869px;width:108px;height:48px;background:#E4F3E5;border-radius:24px;"></div>
<span class="a t" style="left:646.50px;top:875.00px;height:36px;line-height:36px;font-size:24px;color:#1B5924;font-weight:400;letter-spacing:0.859px;">gemini</span>
<div class="a" style="left:742.5px;top:869px;width:63.5px;height:48px;background:#FDF3DC;border-radius:24px;"></div>
<span class="a t" style="left:759.00px;top:875.00px;height:36px;line-height:36px;font-size:24px;color:#7A5A10;font-weight:400;letter-spacing:-0.094px;">vip</span>
<div class="a" style="left:983px;top:869px;width:233.5px;height:48px;background:#FEE8DE;border-radius:24px;"></div>
<svg class="a" style="left:998px;top:879px;color:#8E1F0F;--e:#FEE8DE;" width="28" height="28" viewBox="0 0 24 24"><path fill="url(#gg)" transform="translate(.5 .5) scale(0.9583)" d="M12 24A14.304 14.304 0 0 0 0 12 14.304 14.304 0 0 0 12 0a14.305 14.305 0 0 0 12 12 14.305 14.305 0 0 0-12 12"/></svg>
<span class="a t" style="left:1035.00px;top:875.00px;height:36px;line-height:36px;font-size:24px;color:#8E1F0F;font-weight:400;letter-spacing:0.368px;">Google Gemini</span>
<div class="a" style="left:1374px;top:869px;width:101px;height:48px;background:#E4F3E5;border-radius:24px;"></div>
<span class="a t" style="left:1391.25px;top:877.12px;height:34px;line-height:34px;font-size:22.5px;color:#1B5924;font-weight:400;letter-spacing:-0.508px;">已启用</span>
<div class="a" style="left:1591px;top:869px;width:113.5px;height:48px;background:#E4F3E5;border-radius:24px;"></div>
<span class="a t" style="left:1608.00px;top:876.20px;height:36px;line-height:36px;font-size:24px;color:#1B5924;font-weight:400;letter-spacing:0.422px;">0.38 秒</span>
<div class="a" style="left:1854px;top:869px;width:101.5px;height:48px;background:#fff;border-radius:24px;border:2px solid #D3D5D9;"></div>
<span class="a t" style="left:1871.75px;top:874.00px;height:38px;line-height:38px;font-size:25px;color:#1C1F23;font-weight:400;letter-spacing:0.859px;">$0.40</span>
<div class="a" style="left:1958.5px;top:869px;width:65px;height:48px;background:#fff;border-radius:24px;border:2px solid #D3D5D9;"></div>
<span class="a t" style="left:1976.25px;top:874.00px;height:38px;line-height:38px;font-size:25px;color:#1C1F23;font-weight:400;letter-spacing:1.688px;">$0</span>
<div class="a" style="left:2162px;top:869px;width:140px;height:48px;background:#F4F5F5;border-radius:24px;"></div>
<span class="a t" style="left:2188.50px;top:873.00px;height:42px;line-height:42px;font-size:28px;color:#1C1F23;font-weight:400;">0</span>
<div class="a" style="left:2430px;top:869px;width:140px;height:48px;background:#F4F5F5;border-radius:24px;"></div>
<span class="a t" style="left:2456.50px;top:873.00px;height:42px;line-height:42px;font-size:28px;color:#1C1F23;font-weight:400;">0</span>
<div class="a" style="left:42px;top:1039px;width:3304px;height:2px;background:#EAEBED;border-radius:0px;"></div>
<span class="a t" style="left:74.50px;top:970.00px;height:42px;line-height:42px;font-size:28px;color:#1C1F23;font-weight:400;">7</span>
<span class="a t" style="left:196.00px;top:970.00px;height:42px;line-height:42px;font-size:28px;color:#1C1F23;font-weight:400;letter-spacing:-1.163px;">OPENAI</span>
<div class="a" style="left:516px;top:967px;width:109.5px;height:48px;background:#E3EEFC;border-radius:24px;"></div>
<span class="a t" style="left:532.50px;top:973.00px;height:36px;line-height:36px;font-size:24px;color:#0B4A8F;font-weight:400;letter-spacing:0.740px;">default</span>
<div class="a" style="left:983px;top:967px;width:151px;height:48px;background:#E4F3E5;border-radius:24px;"></div>
<svg class="a" style="left:998px;top:977px;color:#1B5924;--e:#E4F3E5;" width="28" height="28" viewBox="0 0 24 24"><path fill="currentColor" transform="translate(1 1) scale(.9167)" d="M22.2819 9.8211a5.9847 5.9847 0 0 0-.5157-4.9108 6.0462 6.0462 0 0 0-6.5098-2.9A6.0651 6.0651 0 0 0 4.9807 4.1818a5.9847 5.9847 0 0 0-3.9977 2.9 6.0462 6.0462 0 0 0 .7427 7.0966 5.98 5.98 0 0 0 .511 4.9107 6.051 6.051 0 0 0 6.5146 2.9001A5.9847 5.9847 0 0 0 13.2599 24a6.0557 6.0557 0 0 0 5.7718-4.2058 5.9894 5.9894 0 0 0 3.9977-2.9001 6.0557 6.0557 0 0 0-.7475-7.0729zm-9.022 12.6081a4.4755 4.4755 0 0 1-2.8764-1.0408l.1419-.0804 4.7783-2.7582a.7948.7948 0 0 0 .3927-.6813v-6.7369l2.02 1.1686a.071.071 0 0 1 .038.052v5.5826a4.504 4.504 0 0 1-4.4945 4.4944zm-9.6607-4.1254a4.4708 4.4708 0 0 1-.5346-3.0137l.142.0852 4.783 2.7582a.7712.7712 0 0 0 .7806 0l5.8428-3.3685v2.3324a.0804.0804 0 0 1-.0332.0615L9.74 19.9502a4.4992 4.4992 0 0 1-6.1408-1.6464zM2.3408 7.8956a4.485 4.485 0 0 1 2.3655-1.9728V11.6a.7664.7664 0 0 0 .3879.6765l5.8144 3.3543-2.0201 1.1685a.0757.0757 0 0 1-.071 0l-4.8303-2.7865A4.504 4.504 0 0 1 2.3408 7.872zm16.5963 3.8558L13.1038 8.364 15.1192 7.2a.0757.0757 0 0 1 .071 0l4.8303 2.7913a4.4944 4.4944 0 0 1-.6765 8.1042v-5.6772a.79.79 0 0 0-.407-.667zm2.0107-3.0231l-.142-.0852-4.7735-2.7818a.7759.7759 0 0 0-.7854 0L9.409 9.2297V6.8974a.0662.0662 0 0 1 .0284-.0615l4.8303-2.7866a4.4992 4.4992 0 0 1 6.6802 4.66zM8.3065 12.863l-2.02-1.1638a.0804.0804 0 0 1-.038-.0567V6.0742a4.4992 4.4992 0 0 1 7.3757-3.4537l-.142.0805L8.704 5.459a.7948.7948 0 0 0-.3927.6813zm1.0976-2.3654l2.602-1.4998 2.6069 1.4998v2.9994l-2.5974 1.4997-2.6067-1.4997Z"/></svg>
<span class="a t" style="left:1035.00px;top:973.00px;height:36px;line-height:36px;font-size:24px;color:#1B5924;font-weight:400;letter-spacing:0.122px;">OpenAI</span>
<div class="a" style="left:1374px;top:967px;width:101px;height:48px;background:#E4F3E5;border-radius:24px;"></div>
<span class="a t" style="left:1391.25px;top:975.12px;height:34px;line-height:34px;font-size:22.5px;color:#1B5924;font-weight:400;letter-spacing:-0.508px;">已启用</span>
<div class="a" style="left:1591px;top:967px;width:108.5px;height:48px;background:#EEF7DC;border-radius:24px;"></div>
<span class="a t" style="left:1608.00px;top:974.20px;height:36px;line-height:36px;font-size:24px;color:#4F6B0E;font-weight:400;letter-spacing:-0.578px;">1.06 秒</span>
<div class="a" style="left:1854px;top:967px;width:100px;height:48px;background:#fff;border-radius:24px;border:2px solid #D3D5D9;"></div>
<span class="a t" style="left:1871.75px;top:972.00px;height:38px;line-height:38px;font-size:25px;color:#1C1F23;font-weight:400;letter-spacing:0.484px;">$6.05</span>
<div class="a" style="left:1958.5px;top:967px;width:64px;height:48px;background:#fff;border-radius:24px;border:2px solid #D3D5D9;"></div>
<span class="a t" style="left:1976.25px;top:972.00px;height:38px;line-height:38px;font-size:25px;color:#1C1F23;font-weight:400;letter-spacing:0.688px;">$0</span>
<div class="a" style="left:2162px;top:967px;width:140px;height:48px;background:#F4F5F5;border-radius:24px;"></div>
<span class="a t" style="left:2188.50px;top:971.00px;height:42px;line-height:42px;font-size:28px;color:#1C1F23;font-weight:400;">0</span>
<div class="a" style="left:2430px;top:967px;width:140px;height:48px;background:#F4F5F5;border-radius:24px;"></div>
<span class="a t" style="left:2456.50px;top:971.00px;height:42px;line-height:42px;font-size:28px;color:#1C1F23;font-weight:400;">0</span>
<div class="a" style="left:42px;top:1040px;width:2624px;height:98px;background:#E6E8EA;border-radius:0px;"></div>
<div class="a" style="left:42px;top:1137px;width:3304px;height:2px;background:#D8DADD;border-radius:0px;"></div>
<span class="a t" style="left:74.50px;top:1068.00px;height:42px;line-height:42px;font-size:28px;color:#1C1F23;font-weight:400;">8</span>
<span class="a t" style="left:196.00px;top:1068.00px;height:42px;line-height:42px;font-size:28px;color:#1C1F23;font-weight:400;letter-spacing:0.550px;">vertex</span>
<div class="a" style="left:516px;top:1065px;width:109.5px;height:48px;background:#CFDCEB;border-radius:24px;"></div>
<span class="a t" style="left:532.50px;top:1071.00px;height:36px;line-height:36px;font-size:24px;color:#0B4A8F;font-weight:400;letter-spacing:0.740px;">default</span>
<div class="a" style="left:983px;top:1065px;width:169.5px;height:48px;background:#CDD5F0;border-radius:24px;"></div>
<svg class="a" style="left:998px;top:1075px;color:#10418F;--e:#CDD5F0;" width="28" height="28" viewBox="0 0 24 24"><path fill="url(#gg)" transform="translate(.5 .5) scale(0.9583)" d="M12 24A14.304 14.304 0 0 0 0 12 14.304 14.304 0 0 0 12 0a14.305 14.305 0 0 0 12 12 14.305 14.305 0 0 0-12 12"/></svg>
<span class="a t" style="left:1035.00px;top:1071.00px;height:36px;line-height:36px;font-size:24px;color:#10418F;font-weight:400;letter-spacing:0.617px;">Vertex AI</span>
<div class="a" style="left:1374px;top:1065px;width:101px;height:48px;background:#EED2D2;border-radius:24px;"></div>
<span class="a t" style="left:1391.25px;top:1073.12px;height:34px;line-height:34px;font-size:22.5px;color:#A51409;font-weight:400;letter-spacing:-0.508px;">已禁用</span>
<div class="a" style="left:1591px;top:1065px;width:136px;height:48px;background:#EED2D2;border-radius:24px;"></div>
<span class="a t" style="left:1608.00px;top:1072.20px;height:36px;line-height:36px;font-size:24px;color:#A51409;font-weight:400;letter-spacing:-0.297px;">129.74 秒</span>
<div class="a" style="left:1854px;top:1065px;width:100px;height:48px;background:#fff;border-radius:24px;border:2px solid #D3D5D9;"></div>
<span class="a t" style="left:1871.75px;top:1070.00px;height:38px;line-height:38px;font-size:25px;color:#1C1F23;font-weight:400;letter-spacing:0.484px;">$0.00</span>
<div class="a" style="left:1958.5px;top:1065px;width:64px;height:48px;background:#fff;border-radius:24px;border:2px solid #D3D5D9;"></div>
<span class="a t" style="left:1976.25px;top:1070.00px;height:38px;line-height:38px;font-size:25px;color:#1C1F23;font-weight:400;letter-spacing:0.688px;">$0</span>
<div class="a" style="left:2162px;top:1065px;width:140px;height:48px;background:#DDDFE2;border-radius:24px;"></div>
<span class="a t" style="left:2188.50px;top:1069.00px;height:42px;line-height:42px;font-size:28px;color:#1C1F23;font-weight:400;">0</span>
<div class="a" style="left:2430px;top:1065px;width:140px;height:48px;background:#DDDFE2;border-radius:24px;"></div>
<span class="a t" style="left:2456.50px;top:1069.00px;height:42px;line-height:42px;font-size:28px;color:#1C1F23;font-weight:400;">0</span>
<div class="a" style="left:42px;top:1138px;width:2624px;height:98px;background:#E6E8EA;border-radius:0px;"></div>
<div class="a" style="left:42px;top:1235px;width:3304px;height:2px;background:#D8DADD;border-radius:0px;"></div>
<span class="a t" style="left:74.50px;top:1166.00px;height:42px;line-height:42px;font-size:28px;color:#1C1F23;font-weight:400;">9</span>
<span class="a t" style="left:196.00px;top:1166.00px;height:42px;line-height:42px;font-size:28px;color:#1C1F23;font-weight:400;letter-spacing:-0.253px;">OPENAI_copy</span>
<div class="a" style="left:516px;top:1163px;width:109.5px;height:48px;background:#CFDCEB;border-radius:24px;"></div>
<span class="a t" style="left:532.50px;top:1169.00px;height:36px;line-height:36px;font-size:24px;color:#0B4A8F;font-weight:400;letter-spacing:0.740px;">default</span>
<div class="a" style="left:983px;top:1163px;width:151px;height:48px;background:#CFE2D3;border-radius:24px;"></div>
<svg class="a" style="left:998px;top:1173px;color:#1B5924;--e:#CFE2D3;" width="28" height="28" viewBox="0 0 24 24"><path fill="currentColor" transform="translate(1 1) scale(.9167)" d="M22.2819 9.8211a5.9847 5.9847 0 0 0-.5157-4.9108 6.0462 6.0462 0 0 0-6.5098-2.9A6.0651 6.0651 0 0 0 4.9807 4.1818a5.9847 5.9847 0 0 0-3.9977 2.9 6.0462 6.0462 0 0 0 .7427 7.0966 5.98 5.98 0 0 0 .511 4.9107 6.051 6.051 0 0 0 6.5146 2.9001A5.9847 5.9847 0 0 0 13.2599 24a6.0557 6.0557 0 0 0 5.7718-4.2058 5.9894 5.9894 0 0 0 3.9977-2.9001 6.0557 6.0557 0 0 0-.7475-7.0729zm-9.022 12.6081a4.4755 4.4755 0 0 1-2.8764-1.0408l.1419-.0804 4.7783-2.7582a.7948.7948 0 0 0 .3927-.6813v-6.7369l2.02 1.1686a.071.071 0 0 1 .038.052v5.5826a4.504 4.504 0 0 1-4.4945 4.4944zm-9.6607-4.1254a4.4708 4.4708 0 0 1-.5346-3.0137l.142.0852 4.783 2.7582a.7712.7712 0 0 0 .7806 0l5.8428-3.3685v2.3324a.0804.0804 0 0 1-.0332.0615L9.74 19.9502a4.4992 4.4992 0 0 1-6.1408-1.6464zM2.3408 7.8956a4.485 4.485 0 0 1 2.3655-1.9728V11.6a.7664.7664 0 0 0 .3879.6765l5.8144 3.3543-2.0201 1.1685a.0757.0757 0 0 1-.071 0l-4.8303-2.7865A4.504 4.504 0 0 1 2.3408 7.872zm16.5963 3.8558L13.1038 8.364 15.1192 7.2a.0757.0757 0 0 1 .071 0l4.8303 2.7913a4.4944 4.4944 0 0 1-.6765 8.1042v-5.6772a.79.79 0 0 0-.407-.667zm2.0107-3.0231l-.142-.0852-4.7735-2.7818a.7759.7759 0 0 0-.7854 0L9.409 9.2297V6.8974a.0662.0662 0 0 1 .0284-.0615l4.8303-2.7866a4.4992 4.4992 0 0 1 6.6802 4.66zM8.3065 12.863l-2.02-1.1638a.0804.0804 0 0 1-.038-.0567V6.0742a4.4992 4.4992 0 0 1 7.3757-3.4537l-.142.0805L8.704 5.459a.7948.7948 0 0 0-.3927.6813zm1.0976-2.3654l2.602-1.4998 2.6069 1.4998v2.9994l-2.5974 1.4997-2.6067-1.4997Z"/></svg>
<span class="a t" style="left:1035.00px;top:1169.00px;height:36px;line-height:36px;font-size:24px;color:#1B5924;font-weight:400;letter-spacing:0.122px;">OpenAI</span>
<div class="a" style="left:1374px;top:1163px;width:101px;height:48px;background:#EED2D2;border-radius:24px;"></div>
<span class="a t" style="left:1391.25px;top:1171.12px;height:34px;line-height:34px;font-size:22.5px;color:#A51409;font-weight:400;letter-spacing:-0.508px;">已禁用</span>
<div class="a" style="left:1591px;top:1163px;width:113px;height:48px;background:#DCE5CF;border-radius:24px;"></div>
<span class="a t" style="left:1608.00px;top:1170.20px;height:36px;line-height:36px;font-size:24px;color:#4F6B0E;font-weight:400;letter-spacing:0.322px;">2.03 秒</span>
<div class="a" style="left:1854px;top:1163px;width:100px;height:48px;background:#fff;border-radius:24px;border:2px solid #D3D5D9;"></div>
<span class="a t" style="left:1871.75px;top:1168.00px;height:38px;line-height:38px;font-size:25px;color:#1C1F23;font-weight:400;letter-spacing:0.484px;">$0.00</span>
<div class="a" style="left:1958.5px;top:1163px;width:64px;height:48px;background:#fff;border-radius:24px;border:2px solid #D3D5D9;"></div>
<span class="a t" style="left:1976.25px;top:1168.00px;height:38px;line-height:38px;font-size:25px;color:#1C1F23;font-weight:400;letter-spacing:0.688px;">$0</span>
<div class="a" style="left:2162px;top:1163px;width:140px;height:48px;background:#DDDFE2;border-radius:24px;"></div>
<span class="a t" style="left:2188.50px;top:1167.00px;height:42px;line-height:42px;font-size:28px;color:#1C1F23;font-weight:400;">0</span>
<div class="a" style="left:2430px;top:1163px;width:140px;height:48px;background:#DDDFE2;border-radius:24px;"></div>
<span class="a t" style="left:2456.50px;top:1167.00px;height:42px;line-height:42px;font-size:28px;color:#1C1F23;font-weight:400;">0</span>
<div class="a" style="left:2660px;top:377px;width:7px;height:859px;background:rgba(28,31,35,.04);border-radius:0px;"></div>
<div class="a" style="left:2667px;top:377px;width:679px;height:859px;background:#fff;border-radius:0px;"></div>
<div class="a" style="left:2667px;top:449.5px;width:679px;height:3.5px;background:#F0F0F1;border-radius:0px;"></div>
<div class="a" style="left:2667px;top:549px;width:679px;height:2px;background:#EAEBED;border-radius:0px;"></div>
<div class="a" style="left:2700px;top:477px;width:102px;height:48px;background:rgba(46,50,56,.05);border-radius:24px;"></div>
<span class="a t" style="left:2725.00px;top:483.27px;height:38px;line-height:38px;font-size:25.5px;color:#0064FA;font-weight:500;letter-spacing:0.984px;-webkit-text-stroke:.4px;">测试</span>
<div class="a" style="left:2804px;top:477px;width:47px;height:48px;background:rgba(46,50,56,.05);border-radius:24px;"></div>
<svg class="a" style="left:2816px;top:495.5px" width="24" height="15" viewBox="0 0 26 16"><path d="M2.5 1h21a1.2 1.2 0 0 1 .9 2L14 14.6a1.4 1.4 0 0 1-2 0L1.6 3a1.2 1.2 0 0 1 .9-2z" fill="#0064FA"/></svg>
<div class="a" style="left:2868px;top:477px;width:102px;height:48px;background:rgba(46,50,56,.05);border-radius:24.0px;"></div>
<span class="a t" style="left:2893.00px;top:483.27px;height:38px;line-height:38px;font-size:25.5px;color:#0A90F0;font-weight:500;letter-spacing:0.984px;-webkit-text-stroke:.4px;">启用</span>
<div class="a" style="left:2986px;top:477px;width:101px;height:48px;background:rgba(46,50,56,.05);border-radius:24.0px;"></div>
<span class="a t" style="left:3010.50px;top:483.27px;height:38px;line-height:38px;font-size:25.5px;color:#4B4E52;font-weight:500;letter-spacing:0.984px;-webkit-text-stroke:.4px;">编辑</span>
<div class="a" style="left:3103px;top:477px;width:48px;height:48px;background:rgba(46,50,56,.05);border-radius:24px;"></div>
<svg class="a" style="left:3113px;top:497px" width="28" height="8" viewBox="0 0 28 8"><g fill="#46494E"><circle cx="4" cy="4" r="3.2"/><circle cx="14" cy="4" r="3.2"/><circle cx="24" cy="4" r="3.2"/></g></svg>
<div class="a" style="left:2667px;top:647px;width:679px;height:2px;background:#EAEBED;border-radius:0px;"></div>
<div class="a" style="left:2700px;top:575px;width:102px;height:48px;background:rgba(46,50,56,.05);border-radius:24px;"></div>
<span class="a t" style="left:2725.00px;top:581.27px;height:38px;line-height:38px;font-size:25.5px;color:#0064FA;font-weight:500;letter-spacing:0.984px;-webkit-text-stroke:.4px;">测试</span>
<div class="a" style="left:2804px;top:575px;width:47px;height:48px;background:rgba(46,50,56,.05);border-radius:24px;"></div>
<svg class="a" style="left:2816px;top:593.5px" width="24" height="15" viewBox="0 0 26 16"><path d="M2.5 1h21a1.2 1.2 0 0 1 .9 2L14 14.6a1.4 1.4 0 0 1-2 0L1.6 3a1.2 1.2 0 0 1 .9-2z" fill="#0064FA"/></svg>
<div class="a" style="left:2868px;top:575px;width:102px;height:48px;background:rgba(46,50,56,.05);border-radius:24.0px;"></div>
<span class="a t" style="left:2893.00px;top:581.27px;height:38px;line-height:38px;font-size:25.5px;color:#0A90F0;font-weight:500;letter-spacing:0.984px;-webkit-text-stroke:.4px;">启用</span>
<div class="a" style="left:2986px;top:575px;width:101px;height:48px;background:rgba(46,50,56,.05);border-radius:24.0px;"></div>
<span class="a t" style="left:3010.50px;top:581.27px;height:38px;line-height:38px;font-size:25.5px;color:#4B4E52;font-weight:500;letter-spacing:0.984px;-webkit-text-stroke:.4px;">编辑</span>
<div class="a" style="left:3103px;top:575px;width:48px;height:48px;background:rgba(46,50,56,.05);border-radius:24px;"></div>
<svg class="a" style="left:3113px;top:595px" width="28" height="8" viewBox="0 0 28 8"><g fill="#46494E"><circle cx="4" cy="4" r="3.2"/><circle cx="14" cy="4" r="3.2"/><circle cx="24" cy="4" r="3.2"/></g></svg>
<div class="a" style="left:2667px;top:745px;width:679px;height:2px;background:#EAEBED;border-radius:0px;"></div>
<div class="a" style="left:2700px;top:673px;width:102px;height:48px;background:rgba(46,50,56,.05);border-radius:24px;"></div>
<span class="a t" style="left:2725.00px;top:679.27px;height:38px;line-height:38px;font-size:25.5px;color:#0064FA;font-weight:500;letter-spacing:0.984px;-webkit-text-stroke:.4px;">测试</span>
<div class="a" style="left:2804px;top:673px;width:47px;height:48px;background:rgba(46,50,56,.05);border-radius:24px;"></div>
<svg class="a" style="left:2816px;top:691.5px" width="24" height="15" viewBox="0 0 26 16"><path d="M2.5 1h21a1.2 1.2 0 0 1 .9 2L14 14.6a1.4 1.4 0 0 1-2 0L1.6 3a1.2 1.2 0 0 1 .9-2z" fill="#0064FA"/></svg>
<div class="a" style="left:2868px;top:673px;width:102px;height:48px;background:rgba(46,50,56,.05);border-radius:24.0px;"></div>
<span class="a t" style="left:2893.00px;top:679.27px;height:38px;line-height:38px;font-size:25.5px;color:#0A90F0;font-weight:500;letter-spacing:0.984px;-webkit-text-stroke:.4px;">启用</span>
<div class="a" style="left:2986px;top:673px;width:101px;height:48px;background:rgba(46,50,56,.05);border-radius:24.0px;"></div>
<span class="a t" style="left:3010.50px;top:679.27px;height:38px;line-height:38px;font-size:25.5px;color:#4B4E52;font-weight:500;letter-spacing:0.984px;-webkit-text-stroke:.4px;">编辑</span>
<div class="a" style="left:3103px;top:673px;width:48px;height:48px;background:rgba(46,50,56,.05);border-radius:24px;"></div>
<svg class="a" style="left:3113px;top:693px" width="28" height="8" viewBox="0 0 28 8"><g fill="#46494E"><circle cx="4" cy="4" r="3.2"/><circle cx="14" cy="4" r="3.2"/><circle cx="24" cy="4" r="3.2"/></g></svg>
<div class="a" style="left:2667px;top:843px;width:679px;height:2px;background:#EAEBED;border-radius:0px;"></div>
<div class="a" style="left:2700px;top:771px;width:102px;height:48px;background:rgba(46,50,56,.05);border-radius:24px;"></div>
<span class="a t" style="left:2725.00px;top:777.27px;height:38px;line-height:38px;font-size:25.5px;color:#0064FA;font-weight:500;letter-spacing:0.984px;-webkit-text-stroke:.4px;">测试</span>
<div class="a" style="left:2804px;top:771px;width:47px;height:48px;background:rgba(46,50,56,.05);border-radius:24px;"></div>
<svg class="a" style="left:2816px;top:789.5px" width="24" height="15" viewBox="0 0 26 16"><path d="M2.5 1h21a1.2 1.2 0 0 1 .9 2L14 14.6a1.4 1.4 0 0 1-2 0L1.6 3a1.2 1.2 0 0 1 .9-2z" fill="#0064FA"/></svg>
<div class="a" style="left:2868px;top:771px;width:102px;height:48px;background:rgba(46,50,56,.05);border-radius:24.0px;"></div>
<span class="a t" style="left:2893.00px;top:777.27px;height:38px;line-height:38px;font-size:25.5px;color:#FC8800;font-weight:500;letter-spacing:0.984px;-webkit-text-stroke:.4px;">禁用</span>
<div class="a" style="left:2986px;top:771px;width:101px;height:48px;background:rgba(46,50,56,.05);border-radius:24.0px;"></div>
<span class="a t" style="left:3010.50px;top:777.27px;height:38px;line-height:38px;font-size:25.5px;color:#4B4E52;font-weight:500;letter-spacing:0.984px;-webkit-text-stroke:.4px;">编辑</span>
<div class="a" style="left:3103px;top:771px;width:48px;height:48px;background:rgba(46,50,56,.05);border-radius:24px;"></div>
<svg class="a" style="left:3113px;top:791px" width="28" height="8" viewBox="0 0 28 8"><g fill="#46494E"><circle cx="4" cy="4" r="3.2"/><circle cx="14" cy="4" r="3.2"/><circle cx="24" cy="4" r="3.2"/></g></svg>
<div class="a" style="left:2667px;top:941px;width:679px;height:2px;background:#EAEBED;border-radius:0px;"></div>
<div class="a" style="left:2700px;top:869px;width:102px;height:48px;background:rgba(46,50,56,.05);border-radius:24px;"></div>
<span class="a t" style="left:2725.00px;top:875.27px;height:38px;line-height:38px;font-size:25.5px;color:#0064FA;font-weight:500;letter-spacing:0.984px;-webkit-text-stroke:.4px;">测试</span>
<div class="a" style="left:2804px;top:869px;width:47px;height:48px;background:rgba(46,50,56,.05);border-radius:24px;"></div>
<svg class="a" style="left:2816px;top:887.5px" width="24" height="15" viewBox="0 0 26 16"><path d="M2.5 1h21a1.2 1.2 0 0 1 .9 2L14 14.6a1.4 1.4 0 0 1-2 0L1.6 3a1.2 1.2 0 0 1 .9-2z" fill="#0064FA"/></svg>
<div class="a" style="left:2868px;top:869px;width:102px;height:48px;background:rgba(46,50,56,.05);border-radius:24.0px;"></div>
<span class="a t" style="left:2893.00px;top:875.27px;height:38px;line-height:38px;font-size:25.5px;color:#FC8800;font-weight:500;letter-spacing:0.984px;-webkit-text-stroke:.4px;">禁用</span>
<div class="a" style="left:2986px;top:869px;width:101px;height:48px;background:rgba(46,50,56,.05);border-radius:24.0px;"></div>
<span class="a t" style="left:3010.50px;top:875.27px;height:38px;line-height:38px;font-size:25.5px;color:#4B4E52;font-weight:500;letter-spacing:0.984px;-webkit-text-stroke:.4px;">编辑</span>
<div class="a" style="left:3103px;top:869px;width:48px;height:48px;background:rgba(46,50,56,.05);border-radius:24px;"></div>
<svg class="a" style="left:3113px;top:889px" width="28" height="8" viewBox="0 0 28 8"><g fill="#46494E"><circle cx="4" cy="4" r="3.2"/><circle cx="14" cy="4" r="3.2"/><circle cx="24" cy="4" r="3.2"/></g></svg>
<div class="a" style="left:2667px;top:1039px;width:679px;height:2px;background:#EAEBED;border-radius:0px;"></div>
<div class="a" style="left:2700px;top:967px;width:102px;height:48px;background:rgba(46,50,56,.05);border-radius:24px;"></div>
<span class="a t" style="left:2725.00px;top:973.27px;height:38px;line-height:38px;font-size:25.5px;color:#0064FA;font-weight:500;letter-spacing:0.984px;-webkit-text-stroke:.4px;">测试</span>
<div class="a" style="left:2804px;top:967px;width:47px;height:48px;background:rgba(46,50,56,.05);border-radius:24px;"></div>
<svg class="a" style="left:2816px;top:985.5px" width="24" height="15" viewBox="0 0 26 16"><path d="M2.5 1h21a1.2 1.2 0 0 1 .9 2L14 14.6a1.4 1.4 0 0 1-2 0L1.6 3a1.2 1.2 0 0 1 .9-2z" fill="#0064FA"/></svg>
<div class="a" style="left:2868px;top:967px;width:102px;height:48px;background:rgba(46,50,56,.05);border-radius:24.0px;"></div>
<span class="a t" style="left:2893.00px;top:973.27px;height:38px;line-height:38px;font-size:25.5px;color:#FC8800;font-weight:500;letter-spacing:0.984px;-webkit-text-stroke:.4px;">禁用</span>
<div class="a" style="left:2986px;top:967px;width:101px;height:48px;background:rgba(46,50,56,.05);border-radius:24.0px;"></div>
<span class="a t" style="left:3010.50px;top:973.27px;height:38px;line-height:38px;font-size:25.5px;color:#4B4E52;font-weight:500;letter-spacing:0.984px;-webkit-text-stroke:.4px;">编辑</span>
<div class="a" style="left:3103px;top:967px;width:48px;height:48px;background:rgba(46,50,56,.05);border-radius:24px;"></div>
<svg class="a" style="left:3113px;top:987px" width="28" height="8" viewBox="0 0 28 8"><g fill="#46494E"><circle cx="4" cy="4" r="3.2"/><circle cx="14" cy="4" r="3.2"/><circle cx="24" cy="4" r="3.2"/></g></svg>
<div class="a" style="left:2667px;top:1137px;width:679px;height:2px;background:#EAEBED;border-radius:0px;"></div>
<div class="a" style="left:2700px;top:1065px;width:102px;height:48px;background:rgba(46,50,56,.05);border-radius:24px;"></div>
<span class="a t" style="left:2725.00px;top:1071.28px;height:38px;line-height:38px;font-size:25.5px;color:#0064FA;font-weight:500;letter-spacing:0.984px;-webkit-text-stroke:.4px;">测试</span>
<div class="a" style="left:2804px;top:1065px;width:47px;height:48px;background:rgba(46,50,56,.05);border-radius:24px;"></div>
<svg class="a" style="left:2816px;top:1083.5px" width="24" height="15" viewBox="0 0 26 16"><path d="M2.5 1h21a1.2 1.2 0 0 1 .9 2L14 14.6a1.4 1.4 0 0 1-2 0L1.6 3a1.2 1.2 0 0 1 .9-2z" fill="#0064FA"/></svg>
<div class="a" style="left:2868px;top:1065px;width:102px;height:48px;background:rgba(46,50,56,.05);border-radius:24.0px;"></div>
<span class="a t" style="left:2893.00px;top:1071.28px;height:38px;line-height:38px;font-size:25.5px;color:#0A90F0;font-weight:500;letter-spacing:0.984px;-webkit-text-stroke:.4px;">启用</span>
<div class="a" style="left:2986px;top:1065px;width:101px;height:48px;background:rgba(46,50,56,.05);border-radius:24.0px;"></div>
<span class="a t" style="left:3010.50px;top:1071.28px;height:38px;line-height:38px;font-size:25.5px;color:#4B4E52;font-weight:500;letter-spacing:0.984px;-webkit-text-stroke:.4px;">编辑</span>
<div class="a" style="left:3103px;top:1065px;width:48px;height:48px;background:rgba(46,50,56,.05);border-radius:24px;"></div>
<svg class="a" style="left:3113px;top:1085px" width="28" height="8" viewBox="0 0 28 8"><g fill="#46494E"><circle cx="4" cy="4" r="3.2"/><circle cx="14" cy="4" r="3.2"/><circle cx="24" cy="4" r="3.2"/></g></svg>
<div class="a" style="left:2667px;top:1235px;width:679px;height:2px;background:#EAEBED;border-radius:0px;"></div>
<div class="a" style="left:2700px;top:1163px;width:102px;height:48px;background:rgba(46,50,56,.05);border-radius:24px;"></div>
<span class="a t" style="left:2725.00px;top:1169.28px;height:38px;line-height:38px;font-size:25.5px;color:#0064FA;font-weight:500;letter-spacing:0.984px;-webkit-text-stroke:.4px;">测试</span>
<div class="a" style="left:2804px;top:1163px;width:47px;height:48px;background:rgba(46,50,56,.05);border-radius:24px;"></div>
<svg class="a" style="left:2816px;top:1181.5px" width="24" height="15" viewBox="0 0 26 16"><path d="M2.5 1h21a1.2 1.2 0 0 1 .9 2L14 14.6a1.4 1.4 0 0 1-2 0L1.6 3a1.2 1.2 0 0 1 .9-2z" fill="#0064FA"/></svg>
<div class="a" style="left:2868px;top:1163px;width:102px;height:48px;background:rgba(46,50,56,.05);border-radius:24.0px;"></div>
<span class="a t" style="left:2893.00px;top:1169.28px;height:38px;line-height:38px;font-size:25.5px;color:#0A90F0;font-weight:500;letter-spacing:0.984px;-webkit-text-stroke:.4px;">启用</span>
<div class="a" style="left:2986px;top:1163px;width:101px;height:48px;background:rgba(46,50,56,.05);border-radius:24.0px;"></div>
<span class="a t" style="left:3010.50px;top:1169.28px;height:38px;line-height:38px;font-size:25.5px;color:#4B4E52;font-weight:500;letter-spacing:0.984px;-webkit-text-stroke:.4px;">编辑</span>
<div class="a" style="left:3103px;top:1163px;width:48px;height:48px;background:rgba(46,50,56,.05);border-radius:24px;"></div>
<svg class="a" style="left:3113px;top:1183px" width="28" height="8" viewBox="0 0 28 8"><g fill="#46494E"><circle cx="4" cy="4" r="3.2"/><circle cx="14" cy="4" r="3.2"/><circle cx="24" cy="4" r="3.2"/></g></svg>
<span class="a t" style="left:42.00px;top:1278.80px;height:39px;line-height:39px;font-size:26px;color:rgba(28,31,35,.62);font-weight:400;letter-spacing:1.044px;">第 1 - 8 条，共 8 条</span>
<svg class="a" style="left:2876px;top:1281px" width="24" height="32" viewBox="0 0 24 32"><path d="M18 5L7 16l11 11" fill="none" stroke="#A7ABB0" stroke-width="4.5" stroke-linecap="round" stroke-linejoin="round"/></svg>
<div class="a" style="left:2938px;top:1265px;width:64px;height:64px;background:#EAF5FF;border-radius:16px;"></div>
<span class="a t" style="left:2962.21px;top:1276.00px;height:42px;line-height:42px;font-size:28px;color:#0064FA;font-weight:700;">1</span>
<div class="a" style="left:3060px;top:1265px;width:286px;height:64px;background:rgba(46,50,56,.05);border-radius:16px;"></div>
<span class="a t" style="left:3116.00px;top:1279.28px;height:38px;line-height:38px;font-size:25.5px;color:#1C1F23;font-weight:400;letter-spacing:1.021px;">每页条数：10</span>
<svg class="a" style="left:3300px;top:1289px" width="24" height="18" viewBox="0 0 24 18"><path d="M3.5 4.5L12 13l8.5-8.5" fill="none" stroke="#777A7F" stroke-width="3.8" stroke-linecap="round" stroke-linejoin="round"/></svg>
<div class="a" style="left:3034px;top:1224px;width:118px;height:155px;background:#fff;border-radius:12px;box-shadow:0 6px 22px rgba(0,0,0,.09),0 0 2px rgba(0,0,0,.22);"></div>
<span class="a t" style="left:3067.49px;top:1244.78px;height:38px;line-height:38px;font-size:25.5px;color:#E0301E;font-weight:400;">删除</span>
<span class="a t" style="left:3067.49px;top:1316.78px;height:38px;line-height:38px;font-size:25.5px;color:#0064FA;font-weight:400;">复制</span>
<div class="a" style="left:19.5px;top:225.5px;width:184px;height:87px;background:transparent;border-radius:4px;border:8px solid #D9230F;"></div>
<svg class="a" style="left:0;top:0" width="3424" height="1418"><line x1="449" y1="344.3" x2="242.4" y2="306.4" stroke="#D9230F" stroke-width="8"/><polygon points="209.0,300.3 249.2,291.9 243.6,322.4" fill="#D9230F"/></svg>
<span class="a t" style="left:470.00px;top:297.50px;height:100px;line-height:100px;font-size:67px;color:#D9230F;font-weight:400;letter-spacing:1.286px;-webkit-text-stroke:.7px;">点击这里添加渠道</span>
<span class="a t" style="left:2274.50px;top:299.30px;height:100px;line-height:100px;font-size:67px;color:#D9230F;font-weight:400;letter-spacing:1.250px;-webkit-text-stroke:.7px;">点击可以选择具体测试的模型</span>
<svg class="a" style="left:0;top:0" width="3424" height="1418"><line x1="2694.5" y1="408.5" x2="2771.7" y2="453.4" stroke="#D9230F" stroke-width="8"/><polygon points="2802.0,471.0 2760.7,464.4 2775.8,438.4" fill="#D9230F"/></svg>
<div class="a" style="left:2798px;top:463.5px;width:64px;height:75px;background:transparent;border-radius:4px;border:7.6px solid #D9230F;"></div>
<span class="a t" style="left:2266.50px;top:1247.80px;height:94px;line-height:94px;font-size:62.5px;color:#D9230F;font-weight:400;letter-spacing:-2.500px;-webkit-text-stroke:.7px;">点击</span>
<span class="a t" style="left:2390.00px;top:1248.30px;height:93px;line-height:93px;font-size:62px;color:#D9230F;font-weight:700;letter-spacing:-3.000px;">...</span>
<span class="a t" style="left:2429.50px;top:1247.80px;height:94px;line-height:94px;font-size:62.5px;color:#D9230F;font-weight:400;letter-spacing:-0.250px;-webkit-text-stroke:.7px;">有更多操作</span>
<svg class="a" style="left:0;top:0" width="3424" height="1418"><line x1="2787" y1="1283.5" x2="3063.4" y2="1219.9" stroke="#D9230F" stroke-width="8"/><polygon points="3097.5,1212.0 3063.0,1235.9 3056.0,1205.6" fill="#D9230F"/></svg>
<div class="a" style="left:3097px;top:1146.5px;width:63px;height:79.5px;background:transparent;border-radius:4px;border:7.6px solid #D9230F;"></div>
</div>
</body></html>
